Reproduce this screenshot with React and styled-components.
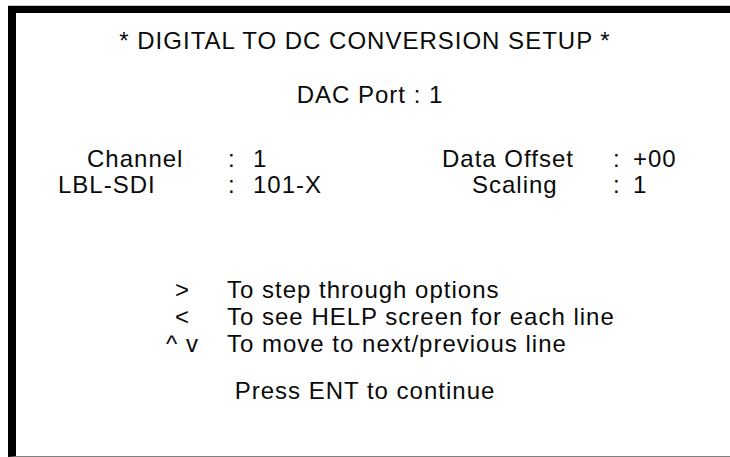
import React from 'react';
import styled, { createGlobalStyle } from 'styled-components';

const fields = [
  [
    { label: 'Channel', indent: 71, value: '1' },
    { label: 'Data Offset', indent: 0, value: '+00' },
  ],
  [
    { label: 'LBL-SDI', indent: 42, value: '101-X' },
    { label: 'Scaling', indent: 30, value: '1' },
  ],
];

const help = [
  { key: '>', text: 'To step through options' },
  { key: '<', text: 'To see HELP screen for each line' },
  { key: '^ v', text: 'To move to next/previous line' },
];

const App = () => {
  return (
    <>
      <Global />
      <Frame>
        <Panel>
          <Title>* DIGITAL TO DC CONVERSION SETUP *</Title>
          <Port>DAC Port : 1</Port>
          <Fields>
            {fields.map((row, i) =>
              row.map((f, j) => (
                <React.Fragment key={`${i}-${j}`}>
                  <Label $indent={f.indent}>{f.label}</Label>
                  <Colon>:</Colon>
                  <Value>{f.value}</Value>
                </React.Fragment>
              ))
            )}
          </Fields>
          <Help>
            {help.map((h) => (
              <React.Fragment key={h.key}>
                <Key>{h.key}</Key>
                <HelpText>{h.text}</HelpText>
              </React.Fragment>
            ))}
          </Help>
          <Prompt>Press ENT to continue</Prompt>
        </Panel>
      </Frame>
    </>
  );
};

export default App;

const Global = createGlobalStyle`
  html, body {
    margin: 0;
    padding: 0;
    background: #fff;
  }
  body {
    font-family: "Liberation Sans", Arial, sans-serif;
    color: #000;
    overflow: hidden;
  }
`;

const Frame = styled.div`
  margin: 5px 0 0 8px;
  height: 452px;
  border-top: 1px solid #c8c8c8;
  box-sizing: border-box;
`;

const Panel = styled.div`
  height: 451px;
  box-sizing: border-box;
  border-top: 7px solid #000;
  border-left: 8px solid #000;
  border-bottom: 1px solid #808080;
  padding: 14px 16px 0 0;
  display: flex;
  flex-direction: column;
  font-size: 24px;
  letter-spacing: 1px;
  line-height: 27px;
  color: #0a0a0a;
`;

const Title = styled.div`
  text-align: center;
`;

const Port = styled.div`
  text-align: center;
  margin-top: 27px;
  padding-left: 10px;
`;

const Fields = styled.div`
  margin-top: 38px;
  display: grid;
  grid-template-columns: 212px 25px 189px 171px 20px auto;
  line-height: 26px;
`;

const Label = styled.span`
  padding-left: ${(p) => p.$indent}px;
  white-space: nowrap;
`;

const Colon = styled.span``;

const Value = styled.span`
  white-space: nowrap;
`;

const Help = styled.div`
  margin-top: 78px;
  padding-left: 144px;
  display: grid;
  grid-template-columns: 45px auto;
  column-gap: 22px;
`;

const Key = styled.span`
  text-align: center;
  white-space: nowrap;
`;

const HelpText = styled.span`
  white-space: nowrap;
`;

const Prompt = styled.div`
  text-align: center;
  margin-top: 20px;
`;
